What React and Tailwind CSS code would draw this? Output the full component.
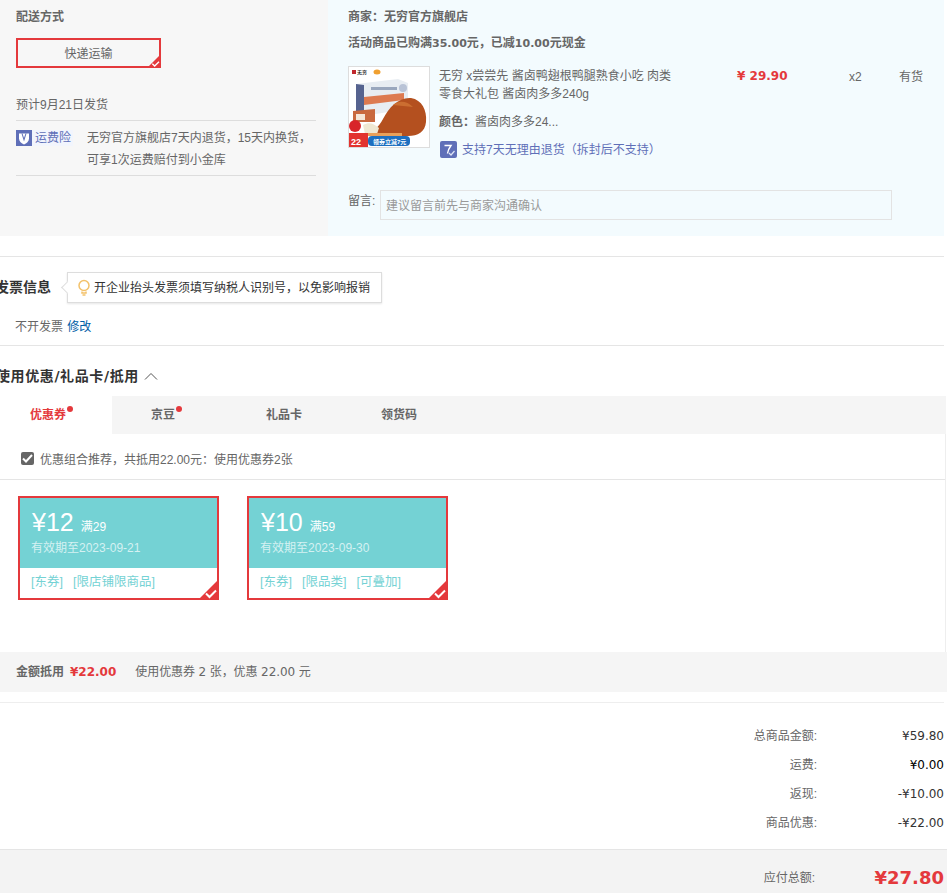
import React from "react";

const DJ = "font-['DejaVu_Sans','Noto_Sans_CJK_SC',sans-serif]";

function Corner({ size = "s" }) {
  const s = size === "s" ? 14 : 21;
  return (
    <svg className="absolute right-[-2px] bottom-[-2px]" width={s} height={s} viewBox="0 0 21 21">
      <path d="M21 0V21H0Z" fill="#e4393c" />
      <path d="M8 14.500l3.500 3.500 6.500-6.500" fill="none" stroke="#fff" strokeWidth="2" />
    </svg>
  );
}

function Coupon({ amount, quota, date, tags }) {
  return (
    <div className="relative w-[201px] h-[104px] border-2 border-[#e4393c] bg-white">
      <div className="h-[70px] bg-[#74d2d4] pl-[12px] text-white">
        <div className="flex items-baseline h-[40px] pt-[6px]">
          <span className="text-[25px] leading-[36px] font-['Liberation_Sans','Noto_Sans_CJK_SC',sans-serif]">¥{amount}</span>
          <span className="ml-[7px] text-xs">满{quota}</span>
        </div>
        <div className="text-xs leading-[16px] mt-[2px] -ml-px text-[#d5f1f2]">有效期至{date}</div>
      </div>
      <div className="pl-[11px] pt-[5px] flex text-[12.500px] leading-[18px] text-[#74d2d4]">
        {tags.map((t) => <span key={t} className="mr-[10px]">[{t}]</span>)}
      </div>
      <Corner size="l" />
    </div>
  );
}

function Row({ label, value, strong }) {
  return (
    <div className="flex justify-end items-center h-[29px] text-xs">
      <span className="text-[#666]">{label}:</span>
      <span className={`w-[127px] text-right ${DJ} ${strong ? "text-black" : "text-[#333]"}`}>{value}</span>
    </div>
  );
}

export default function App() {
  return (
    <div className="w-[947px] h-[893px] overflow-hidden bg-white text-xs text-[#666] font-['Liberation_Sans','Noto_Sans_CJK_SC',sans-serif]">
      <div className="flex w-[944px] h-[236px]">
        <div className="w-[328px] bg-[#f7f7f7] pl-[16px] pr-[12px] pt-[9px]">
          <div className="font-bold leading-[16px]">配送方式</div>
          <div className="relative mt-[13px] w-[145px] h-[30px] border-2 border-[#e4393c] flex items-center justify-center text-[#666] pt-[1px]">
            快递运输
            <Corner />
          </div>
          <div className="mt-[29px] leading-[16px] pb-[7px] border-b border-[#ddd]">预计9月21日发货</div>
          <div className="flex pt-[6px] pb-[4px] border-b border-[#ddd] leading-[22px]">
            <div className="flex items-start w-[71px] shrink-0 pt-[3px]">
              <span className="w-[16px] h-[16px] bg-[#5f6fb8] flex items-center justify-center">
                <svg width="12" height="13" viewBox="0 0 12 13"><path d="M1 1.500h10v5c0 3-2.500 5-5 6-2.500-1-5-3-5-6z" fill="#fff" /><path d="M3.500 1.500l2.500 8 2.500-8-1 0-1.500 4.500-1.500-4.500z" fill="#5f6fb8" /></svg>
              </span>
              <span className="pl-[3px] pr-[2px] bg-[#f2f5fd] text-[#5f6fb8] leading-[16px]">运费险</span>
            </div>
            <div>无穷官方旗舰店7天内退货，15天内换货，<br />可享1次运费赔付到小金库</div>
          </div>
        </div>
        <div className="flex-1 bg-[#f3fbfe] pl-[20px] pt-[9px]">
          <div className={`font-bold leading-[16px] ${DJ}`}>商家：无穷官方旗舰店</div>
          <div className={`font-bold leading-[16px] mt-[10px] ${DJ}`}>活动商品已购满<span className="text-[11px]">35.00</span>元，已减<span className="text-[11px]">10.00</span>元现金</div>
          <div className="flex mt-[14px]">
            <div className="w-[82px] h-[82px] border border-[#ddd] bg-white shrink-0">
              <svg width="80" height="80" viewBox="0 0 80 80">
                <rect x="3" y="3" width="4" height="4" fill="#c0272d" />
                <text x="8" y="7" fontSize="5" fontWeight="700" fill="#333">无穷</text>
                <ellipse cx="28" cy="5" rx="3.500" ry="2.500" fill="#f0a030" />
                <path d="M7 17l42-5 10 4v26L7 50z" fill="#e8edf2" />
                <path d="M7 17l8 1v32H7z" fill="#56638f" />
                <rect x="22" y="20" width="26" height="3" fill="#9aa7bd" />
                <circle cx="54" cy="21" r="4" fill="#b9c3d6" />
                <path d="M15 30l40-4v7L15 38z" fill="#dd7a50" />
                <path d="M4 44l22-2v13H4z" fill="#c9693f" />
                <rect x="7" y="47" width="9" height="6" fill="#f5e6d8" />
                <path d="M20 66c4-2 10-6 14-14 6-12 16-22 28-21 11 2 16 12 15 24-1 10-8 14-18 14-14 1-28 1-39-3z" fill="#b4501f" />
                <path d="M44 38c6-5 14-4 20 2-6-1-14-1-20-2z" fill="#cb6e31" />
                <path d="M14 58c6-3 10-2 16 3l-2 6H16z" fill="#efe8d2" />
                <circle cx="6" cy="59" r="6" fill="#d8252a" />
                <rect x="0" y="66" width="19" height="14" fill="#e2332f" />
                <text x="2" y="77.500" fontSize="9" fontWeight="700" fill="#fff">22</text>
                <rect x="19" y="66" width="34" height="3" fill="#e9a05a" />
                <rect x="19" y="69" width="42" height="10" rx="4" fill="#1d6fc0" />
                <text x="24" y="77" fontSize="6" fontWeight="700" fill="#fff">领券立减7元</text>
              </svg>
            </div>
            <div className="w-[298px] ml-[9px] pt-[1px] shrink-0">
              <div className="leading-[18px]">无穷 x尝尝先 酱卤鸭翅根鸭腿熟食小吃 肉类<br />零食大礼包 酱卤肉多多240g</div>
              <div className="mt-[10px] leading-[18px]"><span className="font-bold">颜色：</span>酱卤肉多多24...</div>
              <div className="flex items-center mt-[10px] text-[#5f6fb8] whitespace-nowrap pl-[1px]">
                <svg className="mr-[5px] shrink-0" width="17" height="17" viewBox="0 0 17 17">
                  <rect width="17" height="17" rx="2" fill="#5f6fb8" />
                  <path d="M4.500 4.500h6.500c-1.500 2-3 4.500-3.500 8" fill="none" stroke="#fff" strokeWidth="1.400" />
                  <path d="M9 12l2 2 3.500-4" fill="none" stroke="#dfe4f5" strokeWidth="1.200" />
                </svg>
                支持7天无理由退货（拆封后不支持）
              </div>
            </div>
            <div className={`w-[112px] pt-[1px] text-[12px] leading-[18px] font-bold text-[#e4393c] whitespace-nowrap shrink-0 ${DJ}`}>¥ 29.90</div>
            <div className="pt-[2px] leading-[18px] w-[50px] shrink-0">x2</div>
            <div className="pt-[2px] leading-[18px]">有货</div>
          </div>
          <div className="flex mt-[32px]">
            <span className="w-[32px] leading-[22px] shrink-0">留言:</span>
            <div className="w-[512px] h-[30px] border border-[#e3e3e3] pl-[5px] leading-[30px] text-[#999]">建议留言前先与商家沟通确认</div>
          </div>
        </div>
      </div>

      <div className="mt-[20px] w-[944px] h-[90px] border-y border-[#e5e5e5]">
        <div className="flex items-center mt-[15px] h-[31px]">
          <span className="ml-[-5px] text-sm font-bold text-[#333] w-[61px] shrink-0 pb-[2px]">发票信息</span>
          <div className="relative ml-[11px] w-[315px] h-[31px] border border-[#ddd] bg-white flex items-center pl-[9px] shadow-[0_1px_2px_rgba(0,0,0,0.1)]">
            <span className="absolute left-[-5px] top-[10px] w-[9px] h-[9px] rotate-45 bg-white border-l border-b border-[#ddd]"></span>
            <svg className="mr-[3px] shrink-0" width="14" height="17" viewBox="0 0 14 17" fill="none" stroke="#f3c26b" strokeWidth="1.500"><circle cx="7" cy="6.500" r="5" /><path d="M5 12.500v1.500h4v-1.500M5.500 16h3" /></svg>
            <span className="text-[#333]">开企业抬头发票须填写纳税人识别号，以免影响报销</span>
          </div>
        </div>
        <div className="ml-[15px] mt-[16px] leading-[16px]">不开发票 <span className="ml-px text-[#005ea7]">修改</span></div>
      </div>

      <div className="flex items-center h-[50px] ml-[-4px] pt-[10px]">
        <span className={`text-sm font-bold text-[#333] ${DJ} tracking-[0.6px]`}>使用优惠/礼品卡/抵用</span>
        <svg className="ml-[5px]" width="14" height="8" viewBox="0 0 14 8" fill="none" stroke="#555"><path d="M1 7.500l6-6 6 6" /></svg>
      </div>

      <div className="flex h-[38px] w-[946px] bg-[#f5f5f5] text-[12px] font-bold">
        <div className="w-[112px] bg-white pl-[30px] leading-[38px] text-[#e4393c] relative">
          优惠券<span className="absolute left-[67px] top-[10px] w-[6px] h-[6px] rounded-full bg-[#e4393c]"></span>
        </div>
        <div className="w-[102px] text-center leading-[38px] relative">
          京豆<span className="absolute left-[64px] top-[10px] w-[6px] h-[6px] rounded-full bg-[#e4393c]"></span>
        </div>
        <div className="w-[140px] text-center leading-[38px]">礼品卡</div>
        <div className="w-[90px] text-center leading-[38px]">领货码</div>
      </div>

      <div className="w-[946px] border-r border-[#eee]">
        <div className="flex items-center h-[46px] pl-[21px] border-b border-[#e5e5e5] pt-[4px]">
          <span className="w-[13px] h-[13px] rounded-[2px] bg-[#666] flex items-center justify-center">
            <svg width="11" height="9" viewBox="0 0 11 9" fill="none" stroke="#fff" strokeWidth="2"><path d="M1 4.500l3 3 6-6.500" /></svg>
          </span>
          <span className="ml-[6px] mt-[2px]">优惠组合推荐，共抵用22.00元：使用优惠券2张</span>
        </div>

        <div className="flex pl-[18px] pt-[16px] gap-[28px] h-[172px]">
          <Coupon amount="12" quota="29" date="2023-09-21" tags={["东券", "限店铺限商品"]} />
          <Coupon amount="10" quota="59" date="2023-09-30" tags={["东券", "限品类", "可叠加"]} />
        </div>
      </div>

      <div className="flex items-center h-[40px] bg-[#f5f5f5] pl-[16px]">
        <span className="font-bold">金额抵用</span>
        <span className={`ml-[6px] text-[12px] font-bold text-[#e4393c] ${DJ}`}>¥22.00</span>
        <span className={`ml-[19px] tracking-[-0.1px] ${DJ}`}>使用优惠券 2 张，优惠 22.00 元</span>
      </div>

      <div className="mt-[10px] w-[944px] border-t border-[#eee] pt-[18px] pb-[12px]">
        <Row label="总商品金额" value="¥59.80" />
        <Row label="运费" value="¥0.00" strong />
        <Row label="返现" value="-¥10.00" />
        <Row label="商品优惠" value="-¥22.00" />
      </div>

      <div className="flex justify-end items-center h-[44px] border-t border-[#e5e5e5] bg-[#f3f3f3] pr-[3px] pt-[13px]">
        <span className="text-[#666]">应付总额:</span>
        <span className={`w-[129px] text-right text-[18px] font-bold text-[#e4393c] ${DJ}`}>¥27.80</span>
      </div>
    </div>
  );
}
